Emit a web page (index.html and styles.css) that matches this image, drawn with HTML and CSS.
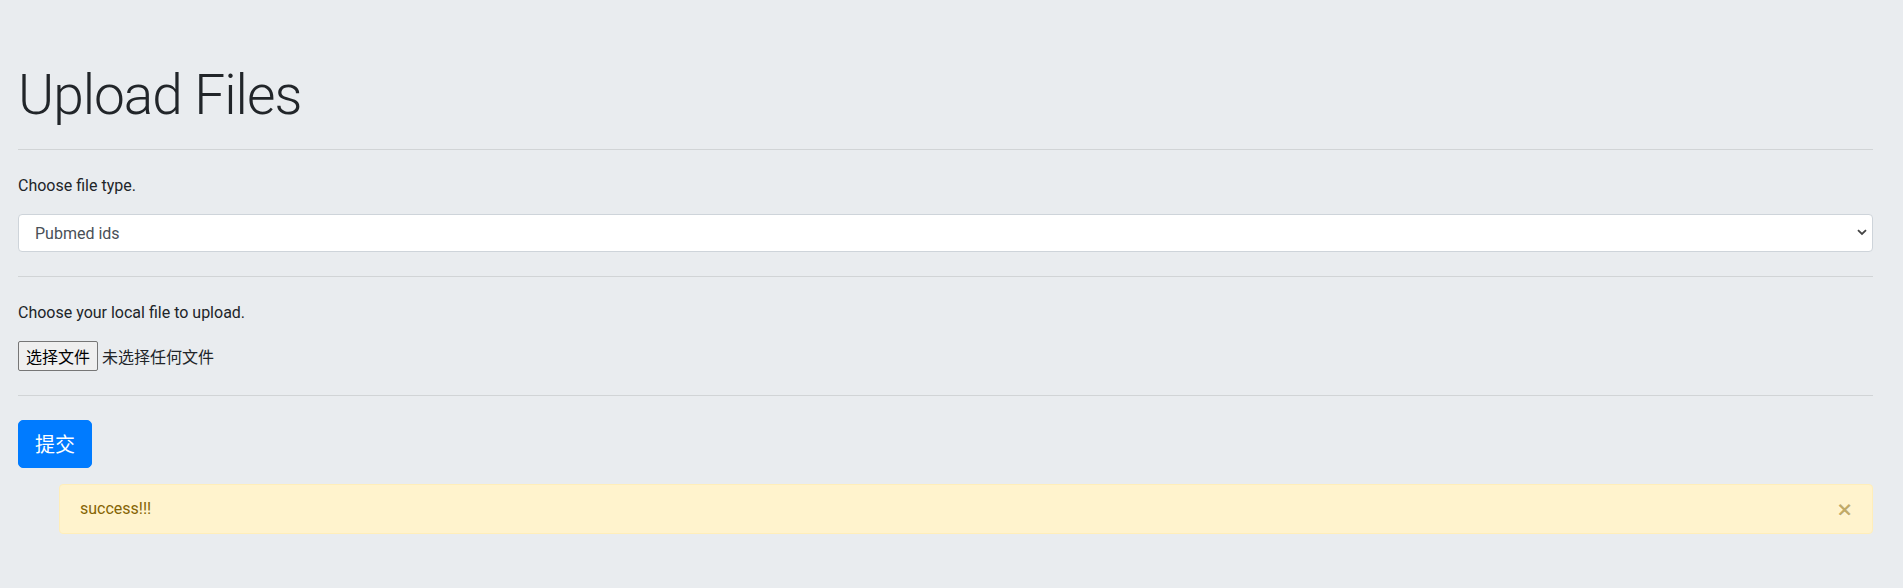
FILE: index.html
```html
<!DOCTYPE html>
<html lang="zh-CN">
<head>
<meta charset="utf-8">
<title>Upload Files</title>
<link rel="stylesheet" href="styles.css">
</head>
<body>
<div class="page">
  <h1 class="title">Upload Files</h1>
  <hr class="rule">
  <form class="upload-form">
    <div class="group">
      <label class="label" for="ftype">Choose file type.</label>
      <div class="select-wrap">
        <select id="ftype" class="select">
          <option>Pubmed ids</option>
        </select>
        <svg class="chevron" width="10" height="7" viewBox="0 0 10 7"><path d="M1 1.2 L5 5 L9 1.2" fill="none" stroke="#444" stroke-width="1.8"/></svg>
      </div>
    </div>
    <hr class="rule">
    <div class="group">
      <label class="label">Choose your local file to upload.</label>
      <div class="file-row">
        <button type="button" class="file-btn">选择文件</button>
        <span class="file-name">未选择任何文件</span>
      </div>
    </div>
    <hr class="rule">
    <button type="button" class="submit">提交</button>
  </form>
  <div class="alert">
    <span class="alert-text">success!!!</span>
    <button type="button" class="close">×</button>
  </div>
</div>
</body>
</html>
```
FILE: styles.css
```css
html, body {
  margin: 0;
  padding: 0;
}
body {
  background: #e9ecef;
  color: #212529;
  font-family: Roboto, "Noto Sans CJK SC", sans-serif;
  font-size: 16px;
  line-height: 1.5;
}
.page {
  padding: 62px 30px 0 18px;
}
.title {
  margin: 0 0 21px 0;
  font-size: 55px;
  font-weight: 300;
  letter-spacing: -1px;
  line-height: 66px;
  color: #212529;
}
.rule {
  margin: 0;
  border: 0;
  border-top: 1px solid rgba(0, 0, 0, 0.1);
  height: 0;
}
.upload-form {
  margin: 0;
}
.group {
  padding: 24px 0;
}
.label {
  display: block;
  font-size: 16px;
  line-height: 24px;
  margin-bottom: 16px;
}
.select-wrap {
  position: relative;
}
.select {
  display: block;
  width: 100%;
  height: 38px;
  padding: 0 12px 0 16px;
  border: 1px solid #ced4da;
  border-radius: 4px;
  background: #fff;
  color: #495057;
  font-family: inherit;
  font-size: 16px;
  -webkit-appearance: none;
  appearance: none;
  box-sizing: border-box;
}
.chevron {
  position: absolute;
  right: 6px;
  top: 15px;
}
.file-row {
  display: flex;
  align-items: center;
  gap: 4px;
  height: 30px;
}
.file-btn {
  height: 30px;
  padding: 0 7px;
  border: 1px solid #767676;
  border-radius: 2px;
  background: #efefef;
  color: #000;
  font-family: "Noto Sans CJK SC", sans-serif;
  font-size: 16px;
  line-height: 28px;
}
.file-name {
  font-family: "Noto Sans CJK SC", sans-serif;
  font-size: 16px;
  color: #212529;
}
.submit {
  display: block;
  margin-top: 24px;
  height: 48px;
  padding: 0 16px;
  border: 1px solid #007bff;
  border-radius: 5px;
  background: #007bff;
  color: #fff;
  font-family: "Noto Sans CJK SC", sans-serif;
  font-size: 20px;
  line-height: 46px;
}
.alert {
  position: relative;
  margin: 16px 0 0 41px;
  height: 50px;
  box-sizing: border-box;
  padding: 0 64px 0 20px;
  display: flex;
  align-items: center;
  background: #fff3cd;
  border: 1px solid #ffeeba;
  border-radius: 4px;
  color: #856404;
  font-size: 16px;
}
.close {
  position: absolute;
  right: 19px;
  top: 50%;
  transform: translateY(-50%);
  padding: 0;
  border: 0;
  background: transparent;
  color: inherit;
  opacity: 0.5;
  font-family: "DejaVu Sans", sans-serif;
  font-size: 20px;
  font-weight: 700;
  line-height: 1;
  text-shadow: 0 1px 0 #fff;
}
```
